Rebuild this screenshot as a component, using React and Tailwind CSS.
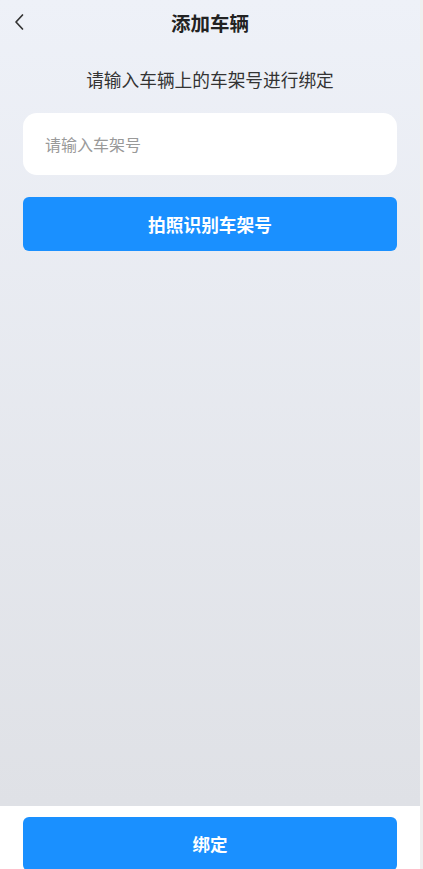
export default function App() {
  const font = { fontFamily: '"Noto Sans CJK SC", "Noto Sans", sans-serif' };
  return (
    <div className="flex h-[869px] w-[423px] overflow-hidden" style={font}>
      <div className="flex w-[420px] flex-col">
        <div className="flex flex-1 flex-col bg-gradient-to-b from-[#eef1f8] to-[#dfe1e6]">
          <div className="relative flex h-[46px] items-center justify-center">
            <svg className="absolute left-[12px] top-[12px]" width="16" height="20" viewBox="0 0 16 20" fill="none">
              <path d="M10.5 3 L4 10 L10.5 17" stroke="#333" strokeWidth="1.7" strokeLinecap="round" strokeLinejoin="round" />
            </svg>
            <span className="text-[19.5px] font-bold leading-[26px] text-[#222]">添加车辆</span>
          </div>
          <div className="mt-[20px] text-center text-[17.7px] leading-[26px] text-[#333]">请输入车辆上的车架号进行绑定</div>
          <div className="mx-[23px] mt-[21px] flex h-[62px] items-center rounded-[14px] bg-white px-[22px]">
            <span className="text-[16px] text-[#999]">请输入车架号</span>
          </div>
          <div className="mx-[23px] mt-[22px] flex h-[54px] items-center justify-center rounded-[6px] bg-[#1a90ff]">
            <span className="text-[17.7px] font-bold text-white">拍照识别车架号</span>
          </div>
        </div>
        <div className="h-[63px] shrink-0 bg-white px-[23px] pt-[11px]">
          <div className="flex h-[54px] items-center justify-center rounded-[6px] bg-[#1a90ff]">
            <span className="text-[17.5px] font-bold text-white">绑定</span>
          </div>
        </div>
      </div>
      <div className="w-[3px] bg-[#efefef]" />
    </div>
  );
}
